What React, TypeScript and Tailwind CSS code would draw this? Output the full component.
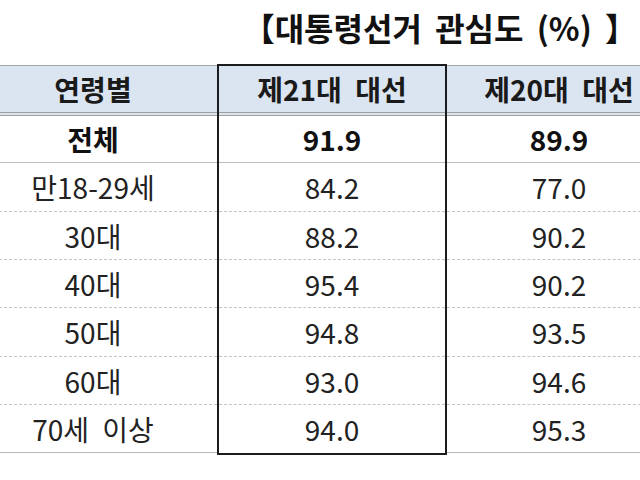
import React from 'react';

interface Row {
  label: string;
  cur: string;
  prev: string;
  bold?: boolean;
  h: string;
  dashed?: boolean;
  last?: boolean;
}

const rows: Row[] = [
  { label: '전체', cur: '91.9', prev: '89.9', bold: true, h: 'h-[47px]' },
  { label: '만18-29세', cur: '84.2', prev: '77.0', h: 'h-[49px]', dashed: true },
  { label: '30대', cur: '88.2', prev: '90.2', h: 'h-[48px]', dashed: true },
  { label: '40대', cur: '95.4', prev: '90.2', h: 'h-[48px]', dashed: true },
  { label: '50대', cur: '94.8', prev: '93.5', h: 'h-[49px]', dashed: true },
  { label: '60대', cur: '93.0', prev: '94.6', h: 'h-[48px]', dashed: true },
  { label: '70세 이상', cur: '94.0', prev: '95.3', h: 'h-[48px]', last: true },
];

const font = { fontFamily: '"Noto Sans CJK KR", "Noto Sans", sans-serif' };

function rowBorder(r: Row) {
  if (r.dashed) return 'border-b border-dashed border-[#c4c4c4]';
  if (r.last) return 'border-b border-[#b8b8b8]';
  return 'border-b border-[#bdbdbd]';
}

function Column({ head, values, boxed }: { head: string; values: (r: Row) => string; boxed?: boolean }) {
  return (
    <div
      className={
        boxed
          ? 'flex flex-col border-x-2 border-t-2 border-b-2 border-[#1c1c1c] w-[230px] shrink-0'
          : 'flex flex-col mt-px'
      }
    >
      <div
        className={`h-[50px] flex items-center justify-center bg-[#dbe5f1] border-b-4 border-double border-[#9f9f9f] text-[28px] font-bold text-[#1a1a1a] [word-spacing:7px] ${
          boxed ? '' : 'border-t border-t-[#a6a6a6] h-[51px]'
        }`}
      >
        {head}
      </div>
      {rows.map((r) => (
        <div
          key={r.label}
          className={`${r.h} flex items-center justify-center text-[28px] [word-spacing:7px] ${
            r.bold ? 'font-bold text-[#111]' : 'text-[#222]'
          } ${boxed && r.last ? 'h-[47px]' : rowBorder(r)}`}
        >
          {values(r)}
        </div>
      ))}
    </div>
  );
}

export default function App() {
  return (
    <div className="w-[640px] h-[480px] bg-white overflow-hidden" style={font}>
      <div className="h-[64px] flex items-center justify-end pr-[3px] pb-[10px]">
        <h1 className="text-[32px] font-bold text-[#111] leading-none [word-spacing:6px] whitespace-nowrap">
          【대통령선거 관심도 (%) 】
        </h1>
      </div>
      <div className="flex items-start -ml-[31px]">
        <div className="w-[248px] shrink-0">
          <Column head="연령별" values={(r) => r.label} />
        </div>
        <Column head="제21대 대선" values={(r) => r.cur} boxed />
        <div className="w-[224px] shrink-0">
          <Column head="제20대 대선" values={(r) => r.prev} />
        </div>
      </div>
    </div>
  );
}
